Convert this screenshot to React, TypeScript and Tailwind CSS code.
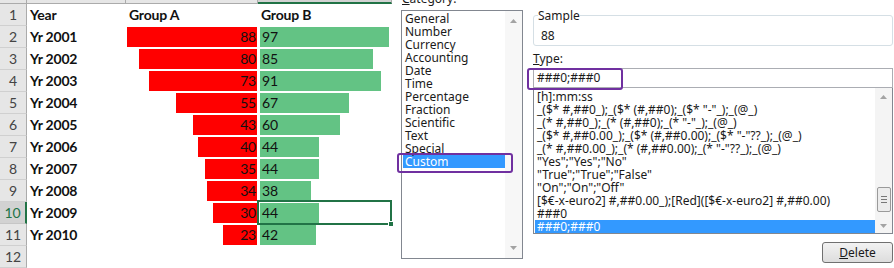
import React from 'react';

const rows: [string, number, number][] = [
  ['Yr 2001', 88, 97],
  ['Yr 2002', 80, 85],
  ['Yr 2003', 73, 91],
  ['Yr 2004', 55, 67],
  ['Yr 2005', 43, 60],
  ['Yr 2006', 40, 44],
  ['Yr 2007', 35, 44],
  ['Yr 2008', 34, 38],
  ['Yr 2009', 30, 44],
  ['Yr 2010', 23, 42],
];

const categories = [
  'General',
  'Number',
  'Currency',
  'Accounting',
  'Date',
  'Time',
  'Percentage',
  'Fraction',
  'Scientific',
  'Text',
  'Special',
  'Custom',
];

const formats = [
  '[h]:mm:ss',
  '_($* #,##0_);_($* (#,##0);_($* "-"_);_(@_)',
  '_(* #,##0_);_(* (#,##0);_(* "-"_);_(@_)',
  '_($* #,##0.00_);_($* (#,##0.00);_($* "-"??_);_(@_)',
  '_(* #,##0.00_);_(* (#,##0.00);_(* "-"??_);_(@_)',
  '"Yes";"Yes";"No"',
  '"True";"True";"False"',
  '"On";"On";"Off"',
  '[$€-x-euro2] #,##0.00_);[Red]([$€-x-euro2] #,##0.00)',
  '###0',
  '###0;###0',
];

function RowHeader({ n, selected }: { n: number; selected?: boolean }) {
  return (
    <div
      className={
        selected
          ? 'flex items-center justify-center bg-[#d2d2d2] border-r-2 border-[#217346] border-b border-b-[#c6c6c6] text-[#217346]'
          : 'flex items-center justify-center bg-[#e6e6e6] border-r border-[#ababab] border-b border-b-[#d0d0d0] text-[#444]'
      }
    >
      {n}
    </div>
  );
}

function Spreadsheet() {
  return (
    <div className="w-[392px] shrink-0 flex flex-col font-['Lato','Liberation_Sans',sans-serif] text-[14px] tracking-[-0.2px] text-[#111]">
      <div className="grid grid-cols-[27px_99px_132px_134px] h-[4px]">
        <div className="bg-[#e6e6e6] border-r border-b border-[#ababab]" />
        <div className="bg-[#e6e6e6] border-r border-b border-[#ababab]" />
        <div className="bg-[#e6e6e6] border-r border-b border-[#ababab]" />
        <div className="bg-[#d2d2d2] border-r border-[#ababab] border-b-2 border-b-[#217346]" />
      </div>
      <div className="grid grid-cols-[27px_99px_132px_134px] h-[23px]">
        <RowHeader n={1} />
        <div className="flex items-center pl-[3px] font-bold">Year</div>
        <div className="flex items-center pl-[3px] font-bold">Group A</div>
        <div className="flex items-center pl-[3px] font-bold">Group B</div>
      </div>
      {rows.map(([year, a, b], i) => {
        const selected = i === 8;
        return (
          <div key={year} className="grid grid-cols-[27px_99px_132px_134px] h-[23px]">
            <RowHeader n={i + 2} selected={selected} />
            <div className="flex items-center pl-[3px] font-bold">{year}</div>
            <div className="flex justify-end pt-[1px] pr-[1px]">
              <div
                className="h-[20px] bg-[#ff0000] flex items-center justify-end pr-[1px]"
                style={{ width: Math.round((a / 88) * 130) }}
              >
                {a}
              </div>
            </div>
            <div className="relative flex justify-start pt-[1px] pl-[2px]">
              <div
                className="h-[20px] bg-[#63c384] flex items-center pl-[2px]"
                style={{ width: Math.round((b / 97) * 129) }}
              >
                {b}
              </div>
              {selected && (
                <div className="absolute -left-[1px] -top-[2px] right-0 -bottom-[1px] border-2 border-[#217346] z-10">
                  <div className="absolute -right-[4px] -bottom-[4px] w-[6px] h-[6px] bg-[#217346] border border-white" />
                </div>
              )}
            </div>
          </div>
        );
      })}
      <div className="grid grid-cols-[27px_99px_132px_134px] h-[23px]">
        <RowHeader n={12} />
      </div>
    </div>
  );
}

function ScrollArrow({ up }: { up?: boolean }) {
  return (
    <svg width="7" height="4" viewBox="0 0 7 4">
      <path d={up ? 'M0 4 L3.5 0 L7 4 Z' : 'M0 0 L3.5 4 L7 0 Z'} fill="#a3a3a3" />
    </svg>
  );
}

function FormatDialog() {
  return (
    <div className="relative flex-1 flex bg-white font-['Noto_Sans','Open_Sans',sans-serif] text-[12px] text-[#1a1a1a]">
      <div className="w-[135px] shrink-0 pl-[9px] flex flex-col">
        <div className="h-[10px]">
          <div className="-mt-[8px] leading-[13px] pl-[1px]">
            <span className="underline">C</span>ategory:
          </div>
        </div>
        <div className="w-[122px] h-[249px] border border-[#828790] flex">
          <div className="flex-1 pt-[1px] pl-[1px]">
            {categories.map((c) => (
              <div
                key={c}
                className={
                  c === 'Custom'
                    ? 'h-[13px] leading-[13px] pl-[2px] bg-[#3399ff] text-white'
                    : 'h-[13px] leading-[13px] pl-[2px]'
                }
              >
                {c}
              </div>
            ))}
          </div>
          <div className="w-[17px] bg-[#f7f7f7] flex flex-col justify-between items-center py-[8px]">
            <ScrollArrow up />
            <ScrollArrow />
          </div>
        </div>
      </div>

      <div className="flex-1 flex flex-col pl-[6px] pr-[1px]">
        <fieldset className="mt-[9px] h-[37px] border border-[#d5dfe5] rounded-[3px] px-[4px]">
          <legend className="leading-[13px] px-0">Sample</legend>
          <div className="pl-[3px] leading-[13px] mt-[7px]">88</div>
        </fieldset>
        <div className="mt-[6px] leading-[13px]">
          <span className="underline">T</span>ype:
        </div>
        <div className="mt-[3px] h-[20px] border border-[#abadb3] flex items-center pl-[3px]">###0;###0</div>
        <div className="h-[146px] border border-[#828790] border-t-0 flex">
          <div className="flex-1 pt-[2px] pl-[1px] whitespace-nowrap overflow-hidden">
            {formats.map((f, i) => (
              <div
                key={i}
                className={
                  i === formats.length - 1
                    ? 'h-[13px] leading-[13px] pl-[2px] bg-[#3399ff] text-white'
                    : 'h-[13px] leading-[13px] pl-[2px]'
                }
              >
                {f}
              </div>
            ))}
          </div>
          <div className="w-[17px] bg-[#f4f4f4] flex flex-col items-center pt-[7px] pb-[5px]">
            <ScrollArrow up />
            <div className="mt-[88px] w-[14px] h-[25px] border border-[#9a9a9a] rounded-[2px] bg-[#ececec] flex flex-col items-center justify-center gap-[2px]">
              <div className="w-[6px] h-px bg-[#777]" />
              <div className="w-[6px] h-px bg-[#777]" />
              <div className="w-[6px] h-px bg-[#777]" />
            </div>
            <div className="mt-auto">
              <ScrollArrow />
            </div>
          </div>
        </div>
        <div className="mt-[8px] flex justify-end">
          <button className="w-[71px] h-[21px] border border-[#707070] rounded-[3px] bg-gradient-to-b from-[#f2f2f2] to-[#dddddd] leading-[13px]">
            <span className="underline">D</span>elete
          </button>
        </div>
      </div>

      <div className="absolute left-[5px] top-[153px] w-[116px] h-[20px] border-2 border-[#7030a0] rounded-[3px]" />
      <div className="absolute left-[135px] top-[68px] w-[96px] h-[22px] border-2 border-[#7030a0] rounded-[3px]" />
    </div>
  );
}

export default function App() {
  return (
    <div className="w-[894px] h-[268px] overflow-hidden flex bg-white">
      <Spreadsheet />
      <FormatDialog />
    </div>
  );
}
